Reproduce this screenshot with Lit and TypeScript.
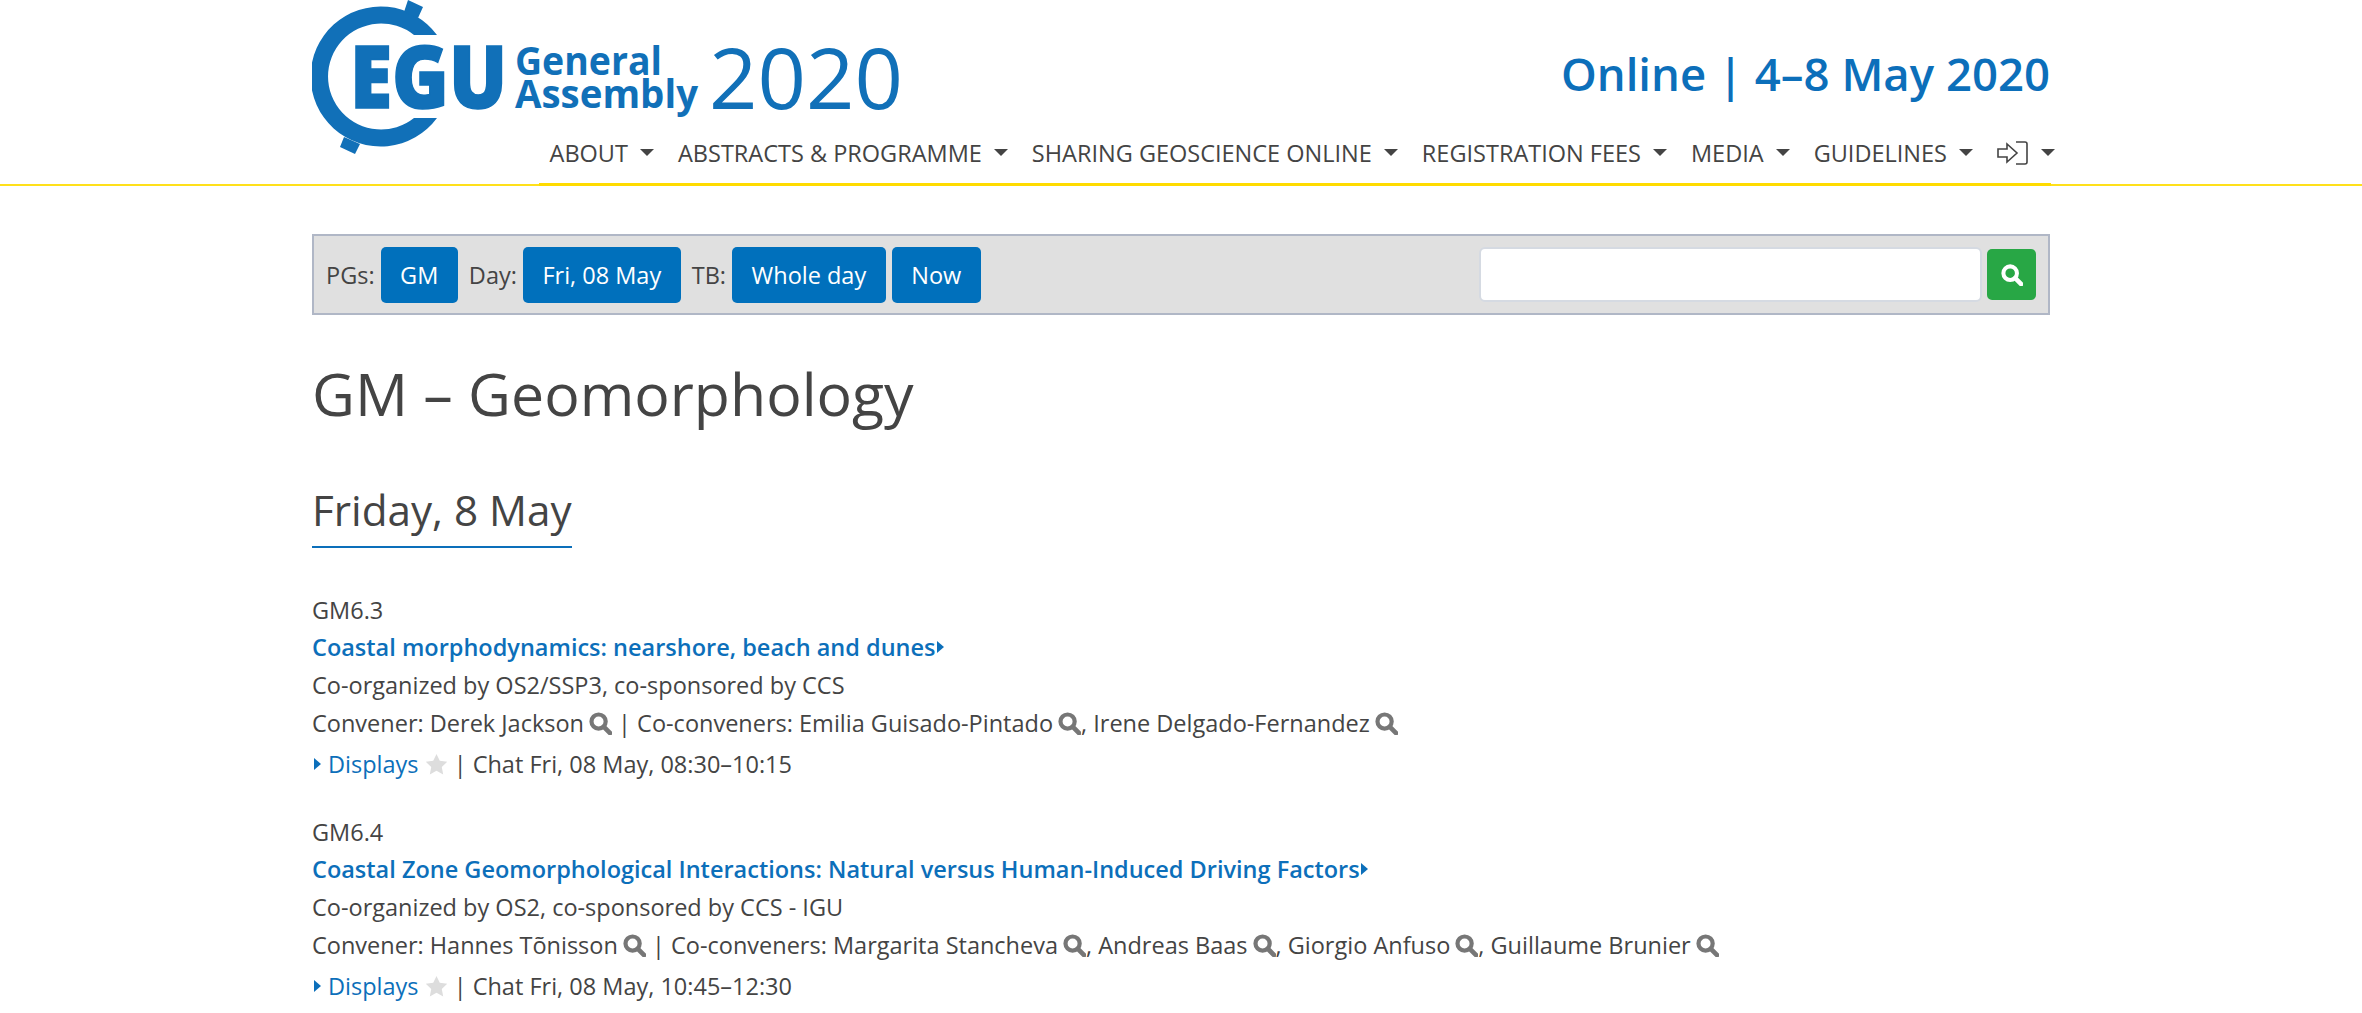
import { LitElement, html, css, svg } from "lit";
import { customElement } from "lit/decorators.js";

const searchIcon = (cls: string) => html`<svg class=${cls} viewBox="0 0 24 24" aria-hidden="true"><circle cx="10" cy="10" r="7.4" fill="none" stroke="currentColor" stroke-width="4.4"/><path d="M15.5 15.5 L22 22" stroke="currentColor" stroke-width="5" stroke-linecap="round"/></svg>`;

const star = html`<svg class="star" viewBox="0 0 24 24" aria-hidden="true"><path d="M12 1 L15.4 8.2 L23.2 9.2 L17.5 14.6 L19 22.4 L12 18.6 L5 22.4 L6.5 14.6 L.8 9.2 L8.6 8.2 Z" fill="currentColor"/></svg>`;

const caret = html`<span class="caret"></span>`;

const logo = html`<svg class="logo" viewBox="0 0 600 160" aria-label="EGU General Assembly 2020">
  <g fill="#1170b8">
    <path d="M125 35 A70 70 0 1 0 125 118 L102 118 A53 53 0 1 1 102 35 Z"/>
    <path d="M96 0 L111 7 L106 18 L92 12 Z"/>
    <path d="M32 137 L48 144 L43 154 L28 147 Z"/>
  </g>
  ${svg`<g fill="#1170b8" font-family="'Open Sans', sans-serif">
    <text x="38" y="108" font-size="86" font-weight="800" stroke="#1170b8" stroke-width="1.5" textLength="157" lengthAdjust="spacingAndGlyphs">EGU</text>
    <text x="203" y="75" font-size="40" font-weight="700" textLength="147" lengthAdjust="spacingAndGlyphs">General</text>
    <text x="203" y="108" font-size="40" font-weight="700" textLength="183" lengthAdjust="spacingAndGlyphs">Assembly</text>
    <text x="397" y="109" font-size="85" font-weight="400" textLength="194" lengthAdjust="spacingAndGlyphs">2020</text>
  </g>`}
</svg>`;

const navItems = ["ABOUT", "ABSTRACTS & PROGRAMME", "SHARING GEOSCIENCE ONLINE", "REGISTRATION FEES", "MEDIA", "GUIDELINES"];

interface Session {
  code: string;
  title: string;
  org: string;
  convener: string;
  co: string[];
  chat: string;
}

const sessions: Session[] = [
  {
    code: "GM6.3",
    title: "Coastal morphodynamics: nearshore, beach and dunes",
    org: "Co-organized by OS2/SSP3, co-sponsored by CCS",
    convener: "Derek Jackson",
    co: ["Emilia Guisado-Pintado", "Irene Delgado-Fernandez"],
    chat: "Chat Fri, 08 May, 08:30–10:15",
  },
  {
    code: "GM6.4",
    title: "Coastal Zone Geomorphological Interactions: Natural versus Human-Induced Driving Factors",
    org: "Co-organized by OS2, co-sponsored by CCS - IGU",
    convener: "Hannes Tõnisson",
    co: ["Margarita Stancheva", "Andreas Baas", "Giorgio Anfuso", "Guillaume Brunier"],
    chat: "Chat Fri, 08 May, 10:45–12:30",
  },
];

@customElement("app-root")
export class AppRoot extends LitElement {
  static styles = css`
    :host {
      display: block;
      font-family: "Open Sans", "Noto Sans", sans-serif;
      color: #444;
      font-size: 23.5px;
      background: #fff;
      height: 1013px;
      overflow: hidden;
    }
    .top {
      height: 184px;
      border-bottom: 2px solid #ffe01a;
    }
    .wrap {
      width: 1738px;
      margin: 0 auto;
    }
    .top .wrap {
      height: 184px;
      display: flex;
      justify-content: space-between;
      position: relative;
    }
    .logo {
      width: 600px;
      height: 160px;
      flex: none;
    }
    .right {
      display: flex;
      flex-direction: column;
      align-items: flex-end;
    }
    .date {
      font-size: 45.5px;
      font-weight: 600;
      color: #0c6fba;
      line-height: 60px;
      margin-top: 43px;
      white-space: nowrap;
    }
    nav {
      position: absolute;
      right: -1px;
      bottom: -2px;
      left: 227px;
      height: 56px;
      border-bottom: 3px solid #ffdb00;
      box-sizing: border-box;
      display: flex;
      justify-content: flex-end;
      align-items: center;
      gap: 24px;
      white-space: nowrap;
      padding-bottom: 8px;
    }
    .nav-item {
      display: flex;
      align-items: center;
      gap: 12px;
    }
    .nav-item.last {
      margin-right: -4px;
    }
    .caret {
      width: 0;
      height: 0;
      border-left: 7px solid transparent;
      border-right: 7px solid transparent;
      border-top: 7px solid #444;
    }
    .signin {
      width: 32px;
      height: 26px;
      color: #444;
    }
    .bar {
      margin-top: 48px;
      height: 81px;
      box-sizing: border-box;
      background: #e0e0e0;
      border: 2px solid #b0b7c6;
      display: flex;
      align-items: center;
      padding: 0 12px;
    }
    .bar label {
      margin-right: 6px;
    }
    .btn {
      height: 56px;
      box-sizing: border-box;
      padding: 0 19.5px;
      background: #0070bc;
      color: #fff;
      border-radius: 5px;
      display: flex;
      align-items: center;
      margin-right: 11px;
      white-space: nowrap;
    }
    .btn.tight {
      margin-right: 6px;
    }
    .spacer {
      flex: 1;
    }
    .input {
      width: 503px;
      height: 55px;
      box-sizing: border-box;
      background: #fff;
      border: 2px solid #d5dae2;
      border-radius: 6px;
      margin-right: 5px;
    }
    .go {
      width: 49px;
      height: 51px;
      background: #28a745;
      border-radius: 5px;
      color: #fff;
      display: flex;
      align-items: center;
      justify-content: center;
    }
    .go-icon {
      width: 22px;
      height: 22px;
    }
    h1 {
      font-size: 59px;
      font-weight: 400;
      margin: 0;
      line-height: 80px;
      margin-top: 38px;
    }
    h2 {
      display: inline-block;
      font-size: 42.2px;
      font-weight: 400;
      margin: 47px 0 0;
      line-height: 60px;
      padding-bottom: 6px;
      border-bottom: 2px solid #0c6fba;
    }
    .sessions {
      margin-top: 44px;
    }
    .session {
      margin-bottom: 28px;
    }
    .row {
      line-height: 37.5px;
      white-space: nowrap;
      display: flex;
      align-items: center;
    }
    .row > span {
      white-space: pre;
    }
    .title {
      color: #0c6fba;
      font-weight: 600;
      margin-top: -1px;
      margin-bottom: 1px;
    }
    .link {
      color: #0c6fba;
    }
    .tri {
      width: 0;
      height: 0;
      border-top: 6px solid transparent;
      border-bottom: 6px solid transparent;
      border-left: 7px solid #0c6fba;
    }
    .title .tri {
      margin-left: 1px;
    }
    .row.disp {
      line-height: 44px;
    }
    .row.disp .tri {
      margin-left: 2px;
      margin-right: 7px;
    }
    .mag {
      width: 23px;
      height: 23px;
      color: #777;
      margin-left: 5px;
    }
    .star {
      width: 23px;
      height: 23px;
      color: #ddd;
      margin-left: 6px;
    }
  `;

  render() {
    return html`
      <div class="top">
        <div class="wrap">
          ${logo}
          <div class="right"><div class="date">Online | 4–8 May 2020</div></div>
          <nav>
            ${navItems.map((n) => html`<div class="nav-item">${n}${caret}</div>`)}
            <div class="nav-item last">
              <svg class="signin" viewBox="0 0 32 26" fill="none" stroke="currentColor" stroke-width="1.6" aria-hidden="true">
                <path d="M1 9 H10 V4 L20 13 L10 22 V17 H1 Z"/>
                <path d="M19 2 H28 Q30 2 30 4 V22 Q30 24 28 24 H19"/>
              </svg>
              ${caret}
            </div>
          </nav>
        </div>
      </div>
      <div class="wrap">
        <div class="bar">
          <label>PGs:</label><div class="btn">GM</div>
          <label>Day:</label><div class="btn">Fri, 08 May</div>
          <label>TB:</label><div class="btn tight">Whole day</div><div class="btn">Now</div>
          <div class="spacer"></div>
          <div class="input"></div>
          <div class="go">${searchIcon("go-icon")}</div>
        </div>
        <h1>GM – Geomorphology</h1>
        <h2>Friday, 8 May</h2>
        <div class="sessions">
          ${sessions.map(
            (s) => html`<div class="session">
              <div class="row">${s.code}</div>
              <div class="row title">${s.title}<span class="tri"></span></div>
              <div class="row">${s.org}</div>
              <div class="row">
                <span>Convener: ${s.convener}</span>${searchIcon("mag")}<span> | Co-conveners: </span>
                ${s.co.map(
                  (c, i) => html`<span>${c}</span>${searchIcon("mag")}${i < s.co.length - 1 ? html`<span>, </span>` : ""}`
                )}
              </div>
              <div class="row disp">
                <span class="tri"></span><span class="link">Displays</span>${star}<span> | ${s.chat}</span>
              </div>
            </div>`
          )}
        </div>
      </div>
    `;
  }
}
